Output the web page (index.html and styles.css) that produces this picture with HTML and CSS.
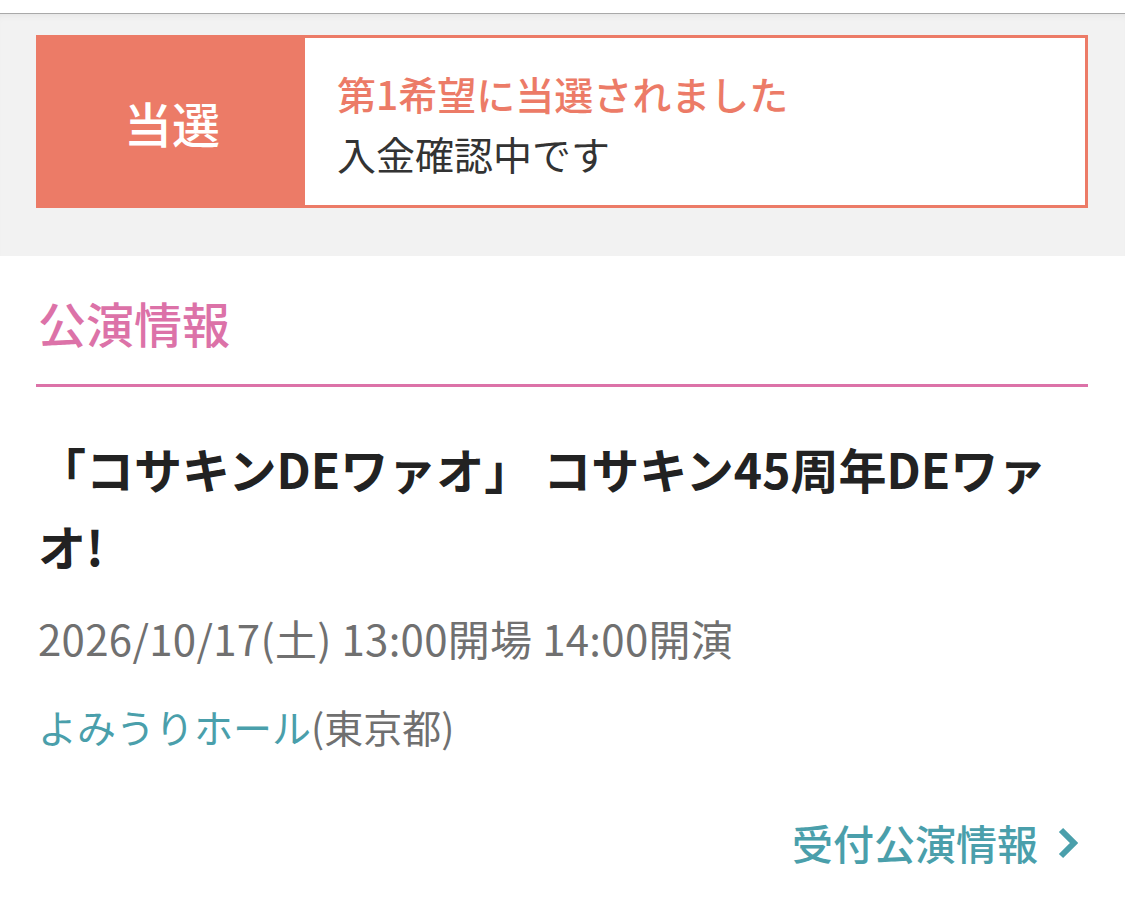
FILE: index.html
```html
<!DOCTYPE html>
<html lang="ja">
<head>
<meta charset="utf-8">
<title>公演情報</title>
<link rel="stylesheet" href="styles.css">
</head>
<body>
<div class="topbar"></div>
<section class="status-area">
  <div class="status">
    <div class="status-label">当選</div>
    <div class="status-text">
      <p class="status-main">第1希望に当選されました</p>
      <p class="status-sub">入金確認中です</p>
    </div>
  </div>
</section>
<section class="info">
  <h2 class="info-heading">公演情報</h2>
  <h3 class="info-title">「コサキンDEワァオ」 コサキン45周年DEワァオ!</h3>
  <p class="info-date">2026/10/17(土) 13:00開場 14:00開演</p>
  <p class="info-venue"><span class="venue-name">よみうりホール</span>(東京都)</p>
  <div class="info-more">
    <a class="more-link" href="#">受付公演情報<svg class="chev" viewBox="0 0 20 32" width="20" height="32"><polyline points="3,3 16,16 3,29" fill="none" stroke="currentColor" stroke-width="6" stroke-linecap="butt" stroke-linejoin="miter"/></svg></a>
  </div>
</section>
</body>
</html>
```
FILE: styles.css
```css
* { box-sizing: border-box; }
html, body { margin: 0; padding: 0; background: #fff; }
body {
  font-family: "Noto Sans CJK JP", "Noto Sans", sans-serif;
  color: #333;
}
p, h2, h3 { margin: 0; }

.topbar {
  height: 14px;
  background: #fff;
  border-bottom: 1px solid #a9a9a9;
}

.status-area {
  background: #f2f2f2;
  padding: 21px 37px 48px 36px;
  box-shadow: inset 0 6px 8px -6px rgba(0,0,0,0.08);
}
.status {
  display: flex;
  height: 173px;
  border: 3px solid #ec7b67;
  background: #fff;
}
.status-label {
  width: 266px;
  background: #ec7b67;
  color: #fff;
  font-size: 48px;
  font-weight: 500;
  display: flex;
  align-items: center;
  justify-content: center;
  padding-top: 0;
}
.status-text {
  display: flex;
  flex-direction: column;
  justify-content: center;
  padding-left: 32px;
  padding-top: 3px;
  font-size: 39px;
  line-height: 60px;
}
.status-main { color: #ec7b67; font-weight: 500; }
.status-sub { color: #333; }

.info {
  padding: 30px 37px 40px 36px;
}
.info-heading {
  font-size: 48px;
  line-height: 72px;
  font-weight: 500;
  color: #dc72a8;
  padding-left: 2px;
  padding-bottom: 26px;
  border-bottom: 3px solid #dc72a8;
}
.info-title {
  margin-top: 43px;
  font-size: 48px;
  line-height: 77px;
  font-weight: 700;
  color: #222;
  padding-left: 2px;
}
.info-date {
  margin-top: 24px;
  font-size: 42px;
  line-height: 60px;
  letter-spacing: 0.3px;
  color: #707070;
  padding-left: 2px;
}
.info-venue {
  margin-top: 28px;
  font-size: 39px;
  line-height: 60px;
  color: #707070;
  padding-left: 2px;
}
.venue-name { color: #4a9fab; }
.info-more {
  margin-top: 56px;
  display: flex;
  justify-content: flex-end;
  padding-right: 10px;
}
.more-link {
  display: flex;
  align-items: center;
  gap: 20px;
  font-size: 41px;
  line-height: 60px;
  font-weight: 500;
  color: #4a9fab;
  text-decoration: none;
}
.chev { display: block; margin-top: 2px; }
```
